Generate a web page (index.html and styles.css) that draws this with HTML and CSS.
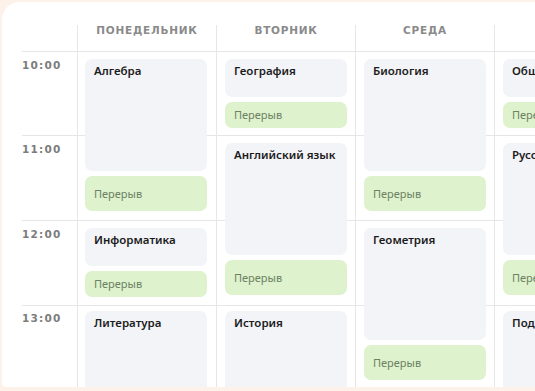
FILE: index.html
```html
<!DOCTYPE html>
<html lang="ru">
<head>
<meta charset="utf-8">
<link rel="stylesheet" href="styles.css">
</head>
<body>
<div class="frame">
  <div class="head">
    <div class="hcell hcell-time"></div>
    <div class="hcell">Понедельник</div>
    <div class="hcell">Вторник</div>
    <div class="hcell">Среда</div>
    <div class="hcell">Четверг</div>
  </div>
  <div class="body">
    <div class="times">
      <div class="time">10:00</div>
      <div class="time">11:00</div>
      <div class="time">12:00</div>
      <div class="time">13:00</div>
    </div>
    <div class="day day-first">
      <div class="lesson h-long">Алгебра</div>
      <div class="brk h-brk-long">Перерыв</div>
      <div class="lesson h-short gap-a">Информатика</div>
      <div class="brk h-brk-short">Перерыв</div>
      <div class="lesson h-rest gap-b">Литература</div>
    </div>
    <div class="day">
      <div class="lesson h-short">География</div>
      <div class="brk h-brk-short">Перерыв</div>
      <div class="lesson h-long gap-c">Английский язык</div>
      <div class="brk h-brk-long">Перерыв</div>
      <div class="lesson h-rest gap-d">История</div>
    </div>
    <div class="day">
      <div class="lesson h-long">Биология</div>
      <div class="brk h-brk-long">Перерыв</div>
      <div class="lesson h-long gap-a">Геометрия</div>
      <div class="brk h-brk-long">Перерыв</div>
    </div>
    <div class="day">
      <div class="lesson h-short">Обществознание</div>
      <div class="brk h-brk-short">Перерыв</div>
      <div class="lesson h-long gap-c">Русский язык</div>
      <div class="brk h-brk-long">Перерыв</div>
      <div class="lesson h-rest gap-d">Подготовка</div>
    </div>
  </div>
</div>
</body>
</html>
```

FILE: styles.css
```css
* { box-sizing: border-box; }
html, body { margin: 0; padding: 0; }
body {
  width: 535px;
  height: 391px;
  overflow: hidden;
  background: #fdf2ea;
  font-family: "Noto Sans", "DejaVu Sans", sans-serif;
}
.frame {
  margin: 2px 0 0 2px;
  width: 640px;
  height: 385px;
  background: #ffffff;
  border-radius: 18px 0 0 4px;
  padding: 20px 0 0 20px;
  overflow: hidden;
}
.head {
  display: grid;
  grid-template-columns: 55px repeat(4, 139px);
  height: 30px;
  border-bottom: 1px solid #e6e6e6;
}
.hcell {
  border-left: 1px solid #e6e6e6;
  margin-top: 3px;
  text-align: center;
  font-family: "DejaVu Sans", sans-serif;
  font-weight: bold;
  font-size: 10.5px;
  letter-spacing: 0.75px;
  text-transform: uppercase;
  color: #8a8a8a;
  line-height: 10px;
  padding-top: 0;
}
.hcell-time { border-left: none; }
.body {
  display: grid;
  grid-template-columns: 55px repeat(4, 139px);
  height: 340px;
  background: repeating-linear-gradient(to bottom, transparent 0 83px, #e6e6e6 83px 84px, transparent 84px 85px);
}
.times {
  display: flex;
  flex-direction: column;
  padding-top: 8px;
}
.time {
  height: 84.4px;
  font-family: "DejaVu Sans", sans-serif;
  font-weight: bold;
  font-size: 10.5px;
  letter-spacing: 1.2px;
  color: #7c7c7c;
  line-height: 11px;
}
.day {
  border-left: 1px solid #e6e6e6;
  padding: 7px 8px 0 8px;
  display: flex;
  flex-direction: column;
}
.day-first { padding-left: 7px; padding-right: 9px; }
.lesson {
  background: #f3f4f8;
  border-radius: 7px;
  padding: 4px 9px 0;
  font-size: 11.5px;
  font-weight: 600;
  line-height: 16px;
  color: #1c1c1c;
  white-space: nowrap;
  overflow: hidden;
}
.brk {
  background: #ddf2cd;
  border-radius: 7px;
  margin-top: 5px;
  padding: 0 9px;
  display: flex;
  align-items: center;
  font-size: 11px;
  line-height: 14px;
  color: #6d8163;
  white-space: nowrap;
  overflow: hidden;
}
.h-long { height: 112px; }
.h-short { height: 38px; }
.h-rest { height: 120px; }
.h-brk-long { height: 35px; }
.h-brk-short { height: 26px; }
.gap-a { margin-top: 17px; }
.gap-b { margin-top: 14px; }
.gap-c { margin-top: 15px; }
.gap-d { margin-top: 16px; }
```
